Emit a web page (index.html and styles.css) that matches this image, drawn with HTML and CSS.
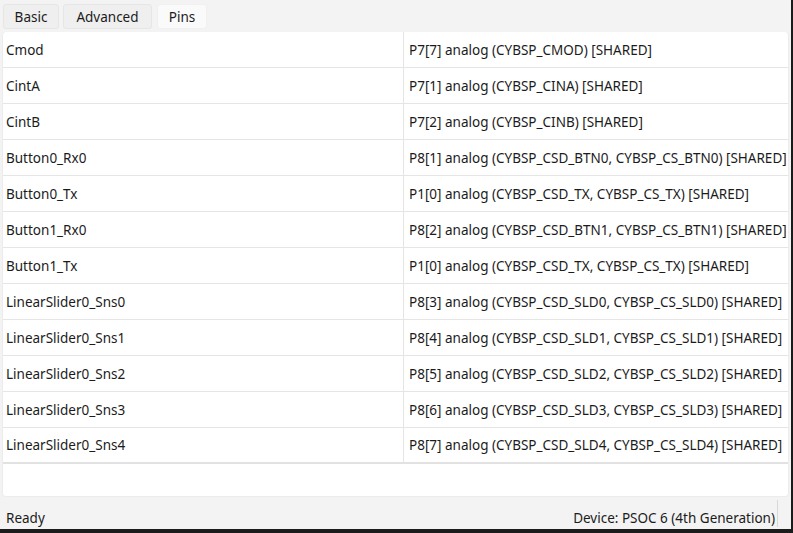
FILE: index.html
```html
<!DOCTYPE html>
<html>
<head>
<meta charset="utf-8">
<link rel="stylesheet" href="styles.css">
</head>
<body>
<div class="window">
  <div class="tabs">
    <div class="tab tab-basic">Basic</div>
    <div class="tab tab-adv">Advanced</div>
    <div class="tab tab-pins active">Pins</div>
  </div>
  <div class="panel">
    <div class="grid">
      <div class="row"><div class="c1">Cmod</div><div class="c2">P7[7] analog (CYBSP_CMOD) [SHARED]</div></div>
      <div class="row"><div class="c1">CintA</div><div class="c2">P7[1] analog (CYBSP_CINA) [SHARED]</div></div>
      <div class="row"><div class="c1">CintB</div><div class="c2">P7[2] analog (CYBSP_CINB) [SHARED]</div></div>
      <div class="row"><div class="c1">Button0_Rx0</div><div class="c2">P8[1] analog (CYBSP_CSD_BTN0, CYBSP_CS_BTN0) [SHARED]</div></div>
      <div class="row"><div class="c1">Button0_Tx</div><div class="c2">P1[0] analog (CYBSP_CSD_TX, CYBSP_CS_TX) [SHARED]</div></div>
      <div class="row"><div class="c1">Button1_Rx0</div><div class="c2">P8[2] analog (CYBSP_CSD_BTN1, CYBSP_CS_BTN1) [SHARED]</div></div>
      <div class="row"><div class="c1">Button1_Tx</div><div class="c2">P1[0] analog (CYBSP_CSD_TX, CYBSP_CS_TX) [SHARED]</div></div>
      <div class="row"><div class="c1">LinearSlider0_Sns0</div><div class="c2">P8[3] analog (CYBSP_CSD_SLD0, CYBSP_CS_SLD0) [SHARED]</div></div>
      <div class="row"><div class="c1">LinearSlider0_Sns1</div><div class="c2">P8[4] analog (CYBSP_CSD_SLD1, CYBSP_CS_SLD1) [SHARED]</div></div>
      <div class="row"><div class="c1">LinearSlider0_Sns2</div><div class="c2">P8[5] analog (CYBSP_CSD_SLD2, CYBSP_CS_SLD2) [SHARED]</div></div>
      <div class="row"><div class="c1">LinearSlider0_Sns3</div><div class="c2">P8[6] analog (CYBSP_CSD_SLD3, CYBSP_CS_SLD3) [SHARED]</div></div>
      <div class="row last"><div class="c1">LinearSlider0_Sns4</div><div class="c2">P8[7] analog (CYBSP_CSD_SLD4, CYBSP_CS_SLD4) [SHARED]</div></div>
    </div>
  </div>
  <div class="status">
    <div class="status-left">Ready</div>
    <div class="status-right">Device: PSOC 6 (4th Generation)</div>
  </div>
</div>
</body>
</html>
```
FILE: styles.css
```css
html, body {
  margin: 0;
  padding: 0;
  width: 793px;
  height: 533px;
  overflow: hidden;
  background: #1b1b1b;
}
body {
  font-family: "Noto Sans", "Open Sans", "Liberation Sans", sans-serif;
  font-size: 13.5px;
  color: #1b1b1b;
}
.window {
  width: 791px;
  height: 529px;
  background: #f3f3f3;
  display: flex;
  flex-direction: column;
}
.tabs {
  height: 32px;
  display: flex;
  align-items: flex-start;
  padding: 4px 0 0 3px;
  box-sizing: border-box;
  gap: 4px;
}
.tab {
  height: 25px;
  box-sizing: border-box;
  border: 1px solid #e6e6e6;
  border-radius: 3px;
  background: #efefef;
  display: flex;
  align-items: center;
  justify-content: center;
  color: #1b1b1b;
}
.tab-basic { width: 56px; }
.tab-adv { width: 89px; }
.tab-pins { width: 50px; margin-left: 1px; }
.tab.active {
  background: #fafafa;
  border-color: #f0f0f0;
}
.panel {
  margin: 0 2px 0 2px;
  height: 465px;
  background: #ffffff;
  border-radius: 4px;
  border: 1px solid #ececec;
  border-top: none;
  box-sizing: border-box;
  overflow: hidden;
}
.grid {
  display: flex;
  flex-direction: column;
}
.row {
  display: flex;
  height: 36px;
  box-sizing: border-box;
  border-bottom: 1px solid #e5e5e5;
}
.row.last {
  border-bottom: 2px solid #e2e2e2;
}
.c1 {
  width: 401px;
  flex-shrink: 0;
  box-sizing: border-box;
  padding-left: 3px;
  border-right: 1px solid #e5e5e5;
  display: flex;
  align-items: center;
}
.c2 {
  flex: 1;
  min-width: 0;
  padding-left: 5px;
  display: flex;
  align-items: center;
  white-space: nowrap;
}
.status {
  flex: 1;
  display: flex;
  align-items: center;
  justify-content: space-between;
  padding: 0 0 0 6px;
  color: #1b1b1b;
}
.status-left { padding-top: 9px; }
.status-right {
  padding: 9px 2px 0 0;
  border-right: 1px solid #d8d8d8;
  margin-right: 13px;
}
```
